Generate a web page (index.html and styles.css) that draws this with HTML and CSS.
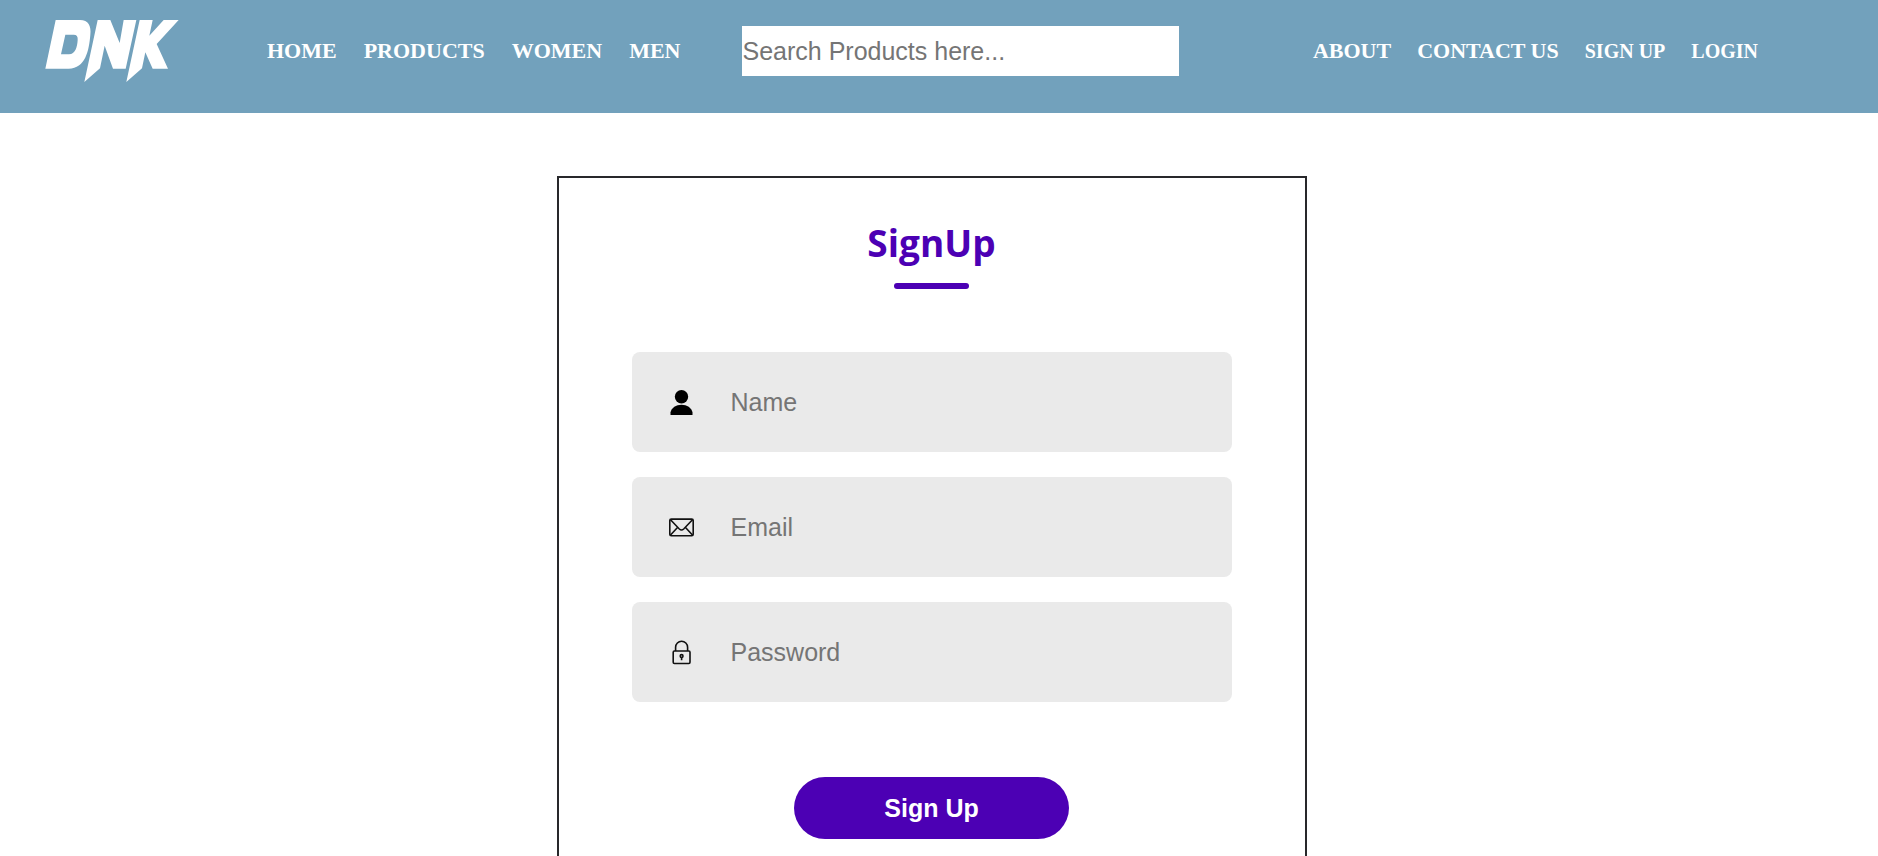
FILE: index.html
```
<!DOCTYPE html>
<html lang="en">
<head>
<meta charset="utf-8">
<meta name="viewport" content="width=device-width, initial-scale=1">
<title>DNK - Sign Up</title>
<link rel="stylesheet" href="styles.css">
</head>
<body>
<header class="header">
  <a class="logo" href="#" aria-label="DNK">
    <svg class="logo-art" viewBox="75 55 405 192" aria-hidden="true">
      <path fill-rule="evenodd" d="M107 58H180C205 58 214 76 211 102C207 150 196 203 146 204H76ZM136 102L123 161H147C166 161 172 138 173 118C174 107 170 102 161 102Z"/>
      <path d="M233 58H271L299 127L311 58H349L317 204H279L254 135L240 203L193 244Z"/>
      <path d="M359 58H398L388 105L431 58H476L410 130L444 204H398L376 155L366 203L319 244Z"/>
    </svg>
  </a>
  <nav class="menu" aria-label="Shop">
    <a href="#">HOME</a>
    <a href="#">PRODUCTS</a>
    <a href="#">WOMEN</a>
    <a href="#">MEN</a>
  </nav>
  <input class="search" type="search" placeholder="Search Products here..." aria-label="Search products">
  <nav class="menu menu-end" aria-label="Account">
    <a href="#">ABOUT</a>
    <a href="#">CONTACT US</a>
    <a class="small" href="#">SIGN UP</a>
    <a class="small" href="#">LOGIN</a>
  </nav>
</header>
<main class="page">
  <form class="card">
    <h1 class="title">SignUp</h1>
    <div class="underline"></div>
    <div class="fields">
      <div class="field">
        <label for="name" aria-label="Name">
          <svg class="icon" viewBox="0 0 25 25" aria-hidden="true"><circle cx="12.5" cy="6.7" r="6.7"/><path d="M1.5 25V22.5C2.5 17.5 7 14.7 12.5 14.7S22.5 17.5 23.5 22.5V25Z"/></svg>
        </label>
        <input id="name" type="text" placeholder="Name">
      </div>
      <div class="field">
        <label for="email" aria-label="Email">
          <svg class="icon line" viewBox="0 0 25 25" aria-hidden="true"><rect x=".8" y="4.1" width="23.4" height="16.6" rx="1.5"/><path d="M1.3 4.500L10.300 14Q12.500 16 14.700 14L23.700 4.500M1.300 20.200L8.500 12.500M23.700 20.200L16.500 12.500"/></svg>
        </label>
        <input id="email" type="email" placeholder="Email">
      </div>
      <div class="field">
        <label for="password" aria-label="Password">
          <svg class="icon line" viewBox="0 0 25 25" aria-hidden="true"><rect x="4.2" y="11" width="16.8" height="12.5" rx="1.200"/><path d="M6.600 11V7.200A6 6 0 0 1 18.600 7.200V11M12.600 17V20.200"/><circle cx="12.600" cy="16" r="1.400"/></svg>
        </label>
        <input id="password" type="password" placeholder="Password">
      </div>
    </div>
    <button class="submit" type="button">Sign Up</button>
  </form>
</main>
</body>
</html>
```
FILE: styles.css
```
* {
  box-sizing: border-box;
}

body {
  margin: 0;
  background: #fff;
  font-family: "Liberation Sans", Arial, sans-serif;
}

.header {
  display: flex;
  align-items: center;
  padding: 19px 120px 30px 45px;
  background: #72a1bc;
}

.logo {
  flex: none;
  margin-right: 87px;
}

.logo-art {
  display: block;
  width: 135px;
  height: 64px;
  fill: #fff;
}

.menu {
  display: flex;
  flex: none;
  align-items: center;
  gap: 27px;
  font: bold 22px/26px "Liberation Serif", "Times New Roman", serif;
}

.menu a {
  color: #fff;
  text-decoration: none;
}

.menu .small {
  font-size: 20px;
}

.menu-end {
  gap: 26px;
  margin-left: auto;
}

.search {
  flex: 0 1 437px;
  min-width: 0;
  height: 50px;
  margin-left: 62px;
  padding: 0;
  border: 0;
  border-radius: 0;
  background: #fff;
  font: 25px "Liberation Sans", Arial, sans-serif;
  appearance: none;
}

::placeholder {
  color: #757575;
  opacity: 1;
}

.page {
  padding: 63px 15px 63px 0;
}

.card {
  display: flex;
  flex-direction: column;
  align-items: center;
  max-width: 750px;
  margin: 0 auto;
  padding: 40px 73px 63px;
  border: 2px solid #28282b;
}

.title {
  margin: 0;
  color: #4c00b4;
  font: bold 37px/50px "Open Sans", "Noto Sans", sans-serif;
}

.underline {
  width: 75px;
  height: 6px;
  margin-top: 15px;
  border-radius: 6px;
  background: #4c00b4;
}

.fields {
  display: flex;
  flex-direction: column;
  gap: 25px;
  width: 100%;
  margin-top: 63px;
}

.field {
  display: flex;
  align-items: center;
  height: 100px;
  border-radius: 8px;
  background: #eaeaea;
}

.icon {
  display: block;
  width: 25px;
  height: 25px;
  margin: 0 37px;
}

.line {
  fill: none;
  stroke: #111;
  stroke-width: 1.6;
}

.field input {
  flex: 1;
  min-width: 0;
  height: 63px;
  margin-right: 37px;
  padding: 0;
  border: 0;
  outline: 0;
  background: transparent;
  font: 25px "Liberation Sans", Arial, sans-serif;
}

.submit {
  width: 275px;
  height: 62px;
  margin-top: 75px;
  border: 0;
  border-radius: 31px;
  background: #4c00b4;
  color: #fff;
  font: bold 25px "Liberation Sans", Arial, sans-serif;
  cursor: pointer;
}
```
